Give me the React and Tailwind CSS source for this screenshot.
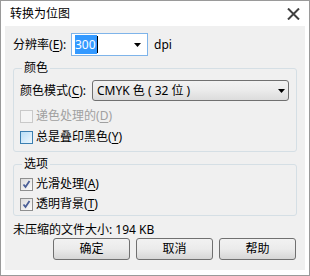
import React from 'react'

const font = { fontFamily: '"Noto Sans", "Noto Sans CJK SC", sans-serif' }

function Arrow() {
  return (
    <svg width="7" height="4" viewBox="0 0 7 4">
      <path d="M0 0 H7 L3.5 4 Z" fill="#000" />
    </svg>
  )
}

function Key({ k }) {
  return (
    <>
      (<span className="underline underline-offset-2">{k}</span>)
    </>
  )
}

function CheckBox({ checked, disabled, hover }) {
  let cls = 'border-[#8e8f8f] bg-gradient-to-br from-[#dcdcdc] to-[#fbfbfb]'
  if (disabled) cls = 'border-[#c9c9c9] bg-[#f4f4f4]'
  if (hover) cls = 'border-[#3c7fb1] bg-gradient-to-br from-[#b9def7] to-[#eef7fd]'
  return (
    <div className={`w-[13px] h-[13px] border ${cls} flex items-center justify-center shrink-0`}>
      {checked && (
        <svg width="9" height="9" viewBox="0 0 9 9">
          <path d="M1.5 4.5 L3.5 7 L7.5 1" fill="none" stroke="#4a5f97" strokeWidth="1.8" />
        </svg>
      )}
    </div>
  )
}

function CheckRow({ label, k, checked, disabled, hover }) {
  return (
    <div className="flex items-center h-[16px] gap-[3px]">
      <CheckBox checked={checked} disabled={disabled} hover={hover} />
      <span className={`leading-[16px] ${disabled ? 'text-[#a0a0a0]' : 'text-black'}`}>
        {label}
        <Key k={k} />
      </span>
    </div>
  )
}

function Button({ children }) {
  return (
    <button className="w-[77px] h-[22px] border border-[#707070] rounded-[3px] bg-gradient-to-b from-[#f2f2f2] via-[#ebebeb] to-[#d6d6d6] text-black leading-[20px]">
      {children}
    </button>
  )
}

export default function App() {
  return (
    <div
      className="w-[310px] h-[276px] border border-[#9a9a9a] bg-white flex flex-col px-[4px] pb-[5px] text-[12px] text-black"
      style={font}
    >
      {/* Title bar */}
      <div className="h-[25px] flex items-center justify-between pl-[5px] pr-[5px] shrink-0">
        <span className="text-[12px] leading-[16px] mt-[1px]">转换为位图</span>
        <svg width="13" height="12" viewBox="0 0 13 12" className="mt-[1px]">
          <path d="M1 0.5 L12 11.5 M12 0.5 L1 11.5" stroke="#404040" strokeWidth="2" />
        </svg>
      </div>

      {/* Body */}
      <div className="flex-1 bg-[#f0f0f0] px-[8px] pt-[7px]">
        <div className="flex items-center h-[23px]">
          <span className="w-[58px] leading-[16px]">
            分辨率<Key k="E" />:
          </span>
          <div className="w-[77px] h-[23px] border border-[#7eb4ea] bg-white flex items-center pl-[3px] pr-[6px]">
            <span className="bg-[#3399ff] text-white leading-[19px] h-[19px] pr-[1px]">300</span>
            <span className="w-px h-[17px] bg-black" />
            <div className="flex-1" />
            <Arrow />
          </div>
          <span className="ml-[6px] leading-[16px]">dpi</span>
        </div>

        <fieldset className="mt-[5px] border border-[#d5dfe5] rounded-[3px] px-[6px] pb-[6px]">
          <legend className="ml-[2px] px-[2px] h-[14px] leading-[14px]">颜色</legend>
          <div className="pt-[5px] flex flex-col">
            <div className="flex items-center h-[21px]">
              <span className="w-[72px] leading-[16px]">
                颜色模式<Key k="C" />:
              </span>
              <div className="w-[197px] h-[21px] border border-[#707070] rounded-[3px] bg-gradient-to-b from-[#f2f2f2] via-[#ebebeb] to-[#dcdcdc] flex items-center pl-[4px] pr-[3px]">
                <span className="flex-1 leading-[16px]">CMYK 色 ( 32 位 )</span>
                <Arrow />
              </div>
            </div>
            <div className="mt-[7px] flex flex-col gap-[5px]">
              <CheckRow label="递色处理的" k="D" disabled />
              <CheckRow label="总是叠印黑色" k="Y" hover />
            </div>
          </div>
        </fieldset>

        <fieldset className="mt-[5px] border border-[#d5dfe5] rounded-[3px] px-[6px] pb-[3px]">
          <legend className="ml-[2px] px-[2px] h-[14px] leading-[14px]">选项</legend>
          <div className="pt-[5px] flex flex-col gap-[4px]">
            <CheckRow label="光滑处理" k="A" checked />
            <CheckRow label="透明背景" k="T" checked />
          </div>
        </fieldset>

        <div className="mt-[6px] h-[16px] leading-[16px]">未压缩的文件大小: 194 KB</div>

        <div className="mt-0 flex justify-end gap-[6px] pr-[1px]">
          <Button>确定</Button>
          <Button>取消</Button>
          <Button>帮助</Button>
        </div>
      </div>
    </div>
  )
}
